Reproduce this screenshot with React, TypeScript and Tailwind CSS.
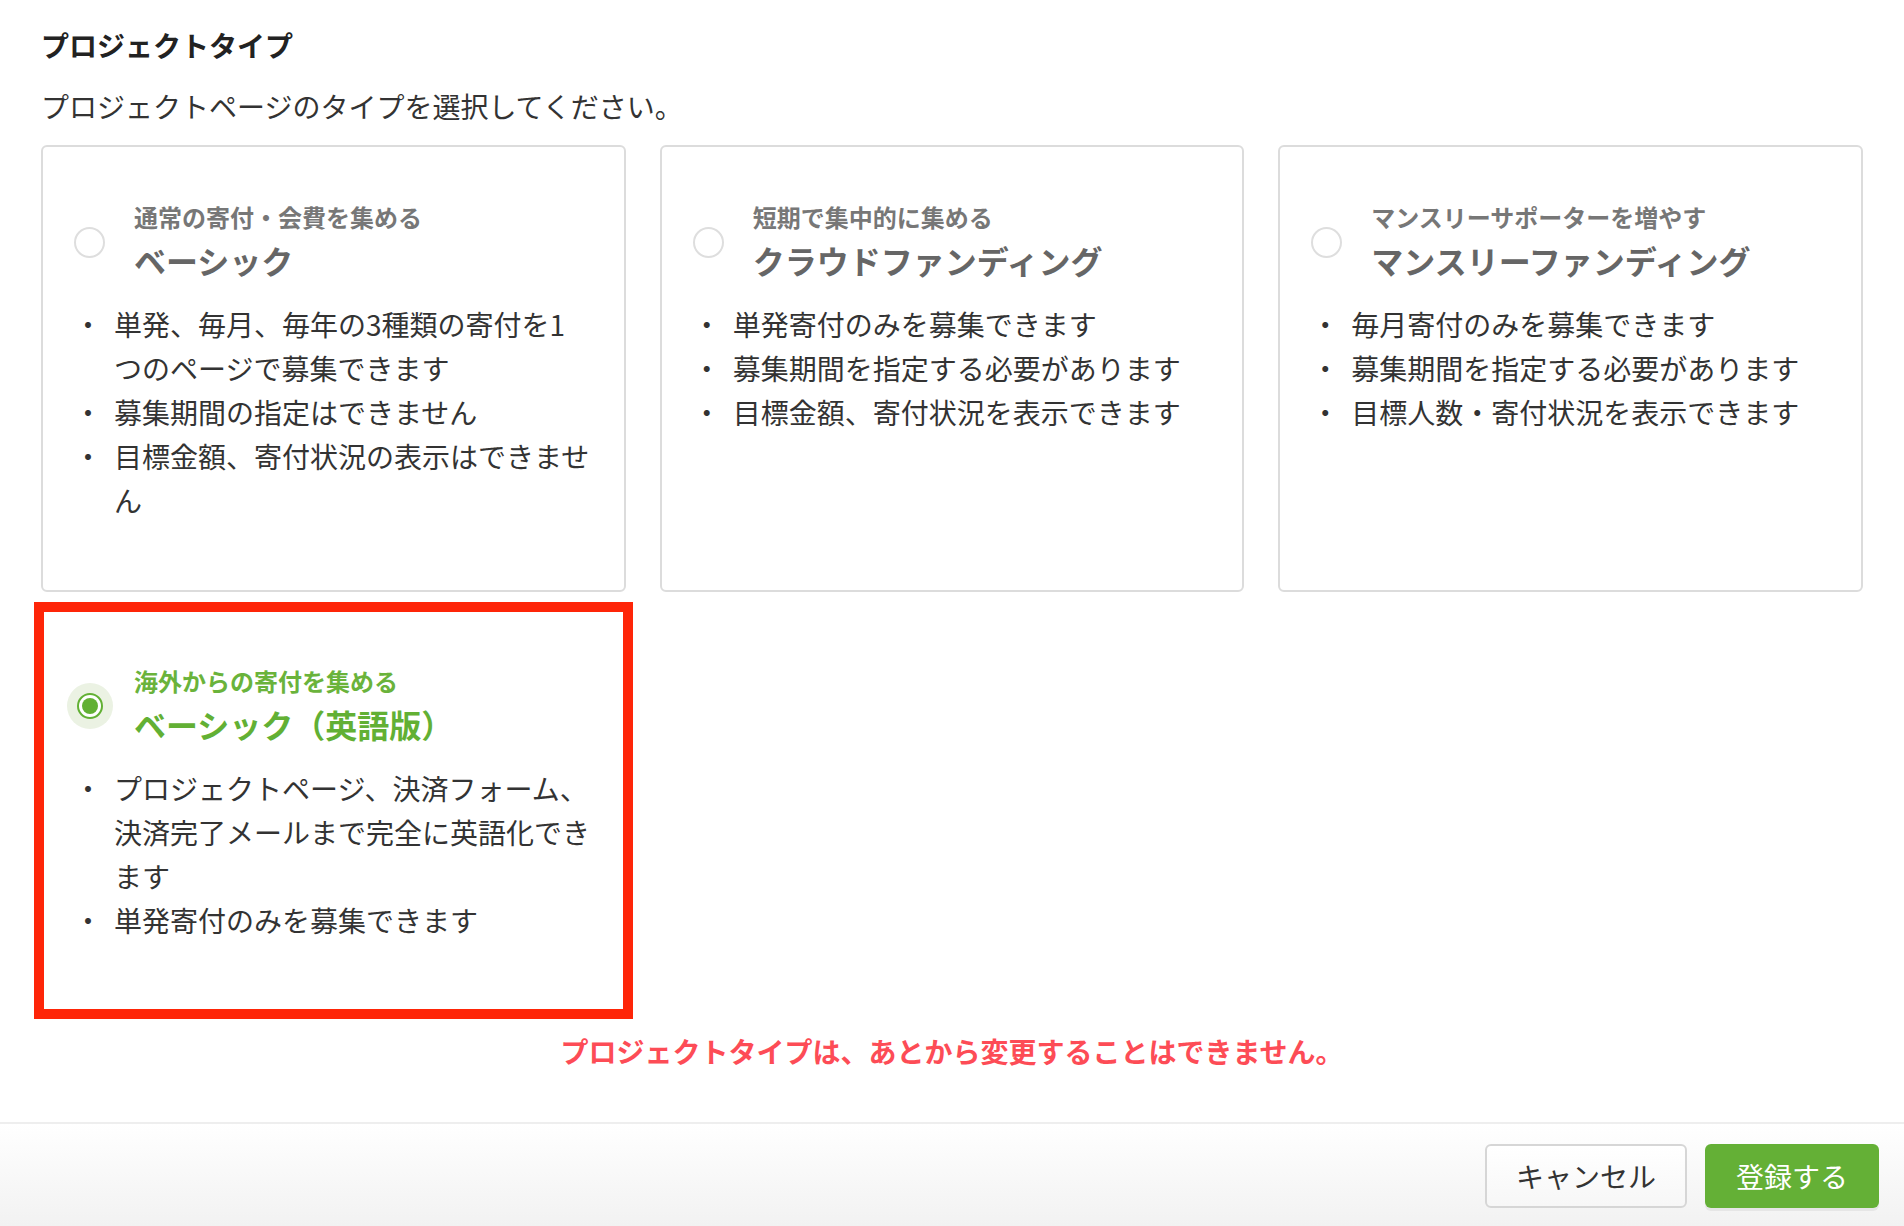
import React, { useState } from 'react';

type ProjectType = {
  id: string;
  lead: string;
  name: string;
  points: React.ReactNode[];
};

const TYPES: ProjectType[] = [
  {
    id: 'basic',
    lead: '通常の寄付・会費を集める',
    name: 'ベーシック',
    points: [
      <>単発、毎月、毎年の3種類の寄付を1<br />つのページで募集できます</>,
      '募集期間の指定はできません',
      <>目標金額、寄付状況の表示はできませ<br />ん</>,
    ],
  },
  {
    id: 'crowd',
    lead: '短期で集中的に集める',
    name: 'クラウドファンディング',
    points: ['単発寄付のみを募集できます', '募集期間を指定する必要があります', '目標金額、寄付状況を表示できます'],
  },
  {
    id: 'monthly',
    lead: 'マンスリーサポーターを増やす',
    name: 'マンスリーファンディング',
    points: ['毎月寄付のみを募集できます', '募集期間を指定する必要があります', '目標人数・寄付状況を表示できます'],
  },
  {
    id: 'basic-en',
    lead: '海外からの寄付を集める',
    name: 'ベーシック（英語版）',
    points: [
      <>プロジェクトページ、決済フォーム、<br />決済完了メールまで完全に英語化でき<br />ます</>,
      '単発寄付のみを募集できます',
    ],
  },
];

function Radio({ checked }: { checked: boolean }) {
  return (
    <div className="flex h-[31px] w-[31px] shrink-0 items-center justify-center">
      {checked ? (
        <div className="flex h-[26px] w-[26px] items-center justify-center rounded-full border-[2.5px] border-[#62b034] bg-white shadow-[0_0_0_10px_#ebf2e3]">
          <div className="h-[16px] w-[16px] rounded-full bg-[#62b034]" />
        </div>
      ) : (
        <div className="h-[31px] w-[31px] rounded-full border-2 border-[#dedede] bg-white" />
      )}
    </div>
  );
}

function TypeCard({ type, checked, onSelect }: { type: ProjectType; checked: boolean; onSelect: () => void }) {
  return (
    <div
      onClick={onSelect}
      className="relative cursor-pointer rounded-[6px] border-2 border-[#dcdcdc] bg-white pb-[68px] pl-[31px] pr-[30px] pt-[52px]"
    >
      {/* Header */}
      <div className="flex items-center gap-[29px]">
        <Radio checked={checked} />
        <div className="flex flex-col font-bold">
          <span className={`text-[24px] leading-[36px] ${checked ? 'text-[#6ab33b]' : 'text-[#777777]'}`}>{type.lead}</span>
          <span className={`text-[32px] leading-[50px] ${checked ? 'text-[#62b034]' : 'text-[#666666]'}`}>{type.name}</span>
        </div>
      </div>

      {/* Points */}
      <ul className="mt-[17px] flex flex-col text-[28px] leading-[44px] text-[#333333]">
        {type.points.map((p, i) => (
          <li key={i} className="flex">
            <span className="w-[40px] shrink-0">・</span>
            <span>{p}</span>
          </li>
        ))}
      </ul>

      {/* highlight frame around the selected card */}
      {checked && <span className="pointer-events-none absolute -inset-[9px] border-[10px] border-[#fe2508]" />}
    </div>
  );
}

export default function App() {
  const [selected, setSelected] = useState('basic-en');

  return (
    <div className="flex min-h-[1226px] flex-col bg-white font-['Noto_Sans_CJK_JP','Noto_Sans',sans-serif] text-[#333333]">
      <div className="px-[41px] pt-[24px]">
        <h2 className="text-[28px] font-bold leading-[42px] text-[#222222]">プロジェクトタイプ</h2>
        <p className="mt-[19px] text-[28px] leading-[42px]">プロジェクトページのタイプを選択してください。</p>

        {/* Cards */}
        <div className="mt-[18px] grid grid-cols-3 gap-x-[34px] gap-y-[17px]">
          {TYPES.map((t) => (
            <TypeCard key={t.id} type={t} checked={selected === t.id} onSelect={() => setSelected(t.id)} />
          ))}
        </div>

        <p className="mt-[18px] text-center text-[28px] font-bold leading-[42px] text-[#fd4c56]">
          プロジェクトタイプは、あとから変更することはできません。
        </p>
      </div>

      {/* Footer */}
      <div className="mt-auto flex justify-end gap-[18px] border-t-2 border-[#eeeeee] bg-gradient-to-b from-white to-[#f2f2f2] pb-[18px] pl-[41px] pr-[25px] pt-[20px]">
        <button className="h-[64px] w-[202px] rounded-[6px] border-2 border-[#d6d6d6] bg-gradient-to-b from-white to-[#f7f7f7] text-[28px] text-[#333333]">
          キャンセル
        </button>
        <button className="h-[64px] w-[174px] rounded-[6px] bg-[#64b036] text-[28px] text-white shadow-[0_3px_0_#e6e6e6]">
          登録する
        </button>
      </div>
    </div>
  );
}
